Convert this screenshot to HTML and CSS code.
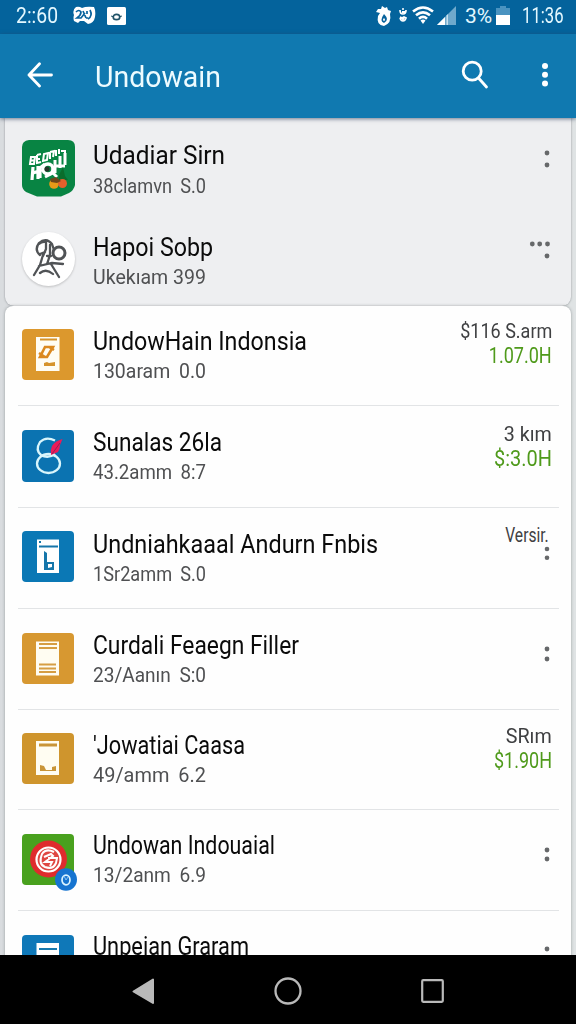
FILE: index.html
```html
<!DOCTYPE html>
<html lang="id">
<head>
<meta charset="utf-8">
<title>Undowain</title>
<link rel="stylesheet" href="styles.css">
</head>
<body>
<div class="screen">
  <header class="statusbar">
    <span class="clock">2::60</span>
    <svg class="note-icon" width="23" height="19" viewBox="0 0 23 19">
      <path fill="#fff" d="M3 1Q6 0 9 2Q13 0 21 1Q23 5 22 11Q21 17 15 18L11 15H7L5 17L1 15Q0 12 1 9Q-1 4 3 1Z"/>
      <path fill="none" stroke="#07629c" stroke-width="1.7" d="M3 6Q6 3 8 6Q8 9 4 12H8L12 7M10 5L13 12M14 5V8M17 4Q20 10 15 13M13 12H15"/>
    </svg>
    <svg class="app-icon" width="19" height="18" viewBox="0 0 19 18">
      <rect width="19" height="18" rx="1.5" fill="#fff"/>
      <ellipse cx="9.5" cy="10" rx="3.3" ry="2.7" fill="none" stroke="#225368" stroke-width="1.7"/>
      <path d="M4 9L7 10M12 10L15 9" stroke="#225368"/>
    </svg>
    <span class="spacer"></span>
    <svg class="flame" width="16" height="20" viewBox="0 0 16 20">
      <path fill="#fff" d="M6 0L9 2L11 1L12 4L15 5L14 8Q16 17 8 20Q0 19 2 10L4 7L0 6L2 3H5Z"/>
      <path fill="#07629c" d="M8 8Q14 14 8 17Q3 15 8 8Z"/>
      <path fill="#fff" d="M8 12Q10 14 8 15Q6 14 8 12Z"/>
    </svg>
    <svg class="mini" width="8" height="15" viewBox="0 0 8 15">
      <path fill="none" stroke="#fff" stroke-width="1.7" d="M1 2Q1 6 4 6Q7 6 7 2M3 1H5M1 9L3 10L5 9L7 10Q6 13 4 13Q2 13 1 10"/>
      <path fill="#fff" d="M3 3H6V5H3ZM2 10H6L4 13Z"/>
    </svg>
    <svg class="wifi" width="22" height="19" viewBox="0 0 22 19">
      <path fill="none" stroke="#fff" stroke-width="2.6" d="M1 5.5Q11-2.5 21 5.5M4 9.3Q11 3.5 18 9.3M7 12.8Q11 9 15 12.8"/>
      <path fill="#fff" d="M8.5 14.5Q11 12.5 13.5 14.5L11 18Z"/>
    </svg>
    <svg class="signal" width="19" height="19" viewBox="0 0 19 19">
      <path fill="#6fa9cc" d="M0 19L19 0V19Z"/>
      <path fill="#fff" d="M0 19L8 11V19Z"/>
      <path fill="#c6e0ee" d="M9.5 9.5L11 8V19H9.5Z"/>
    </svg>
    <span class="percent">3%</span>
    <svg class="battery" width="14" height="19" viewBox="0 0 14 19">
      <path fill="#4a93c0" d="M4 0H10V2H14V9H0V2H4Z"/>
      <path fill="#fff" d="M0 9H14V19H0Z"/>
    </svg>
    <span class="time">11:36</span>
  </header>

  <nav class="appbar">
    <svg class="back" width="26" height="26" viewBox="0 0 26 26">
      <path fill="none" stroke="#fff" stroke-width="2.8" stroke-linecap="round" stroke-linejoin="round" d="M12.5 1.7L2 13L12.500 24M2 13H24.5"/>
    </svg>
    <h1>Undowain</h1>
    <span class="spacer"></span>
    <svg class="search" width="28" height="29" viewBox="0 0 28 29">
      <g fill="none" stroke="#fff" stroke-width="2.8" stroke-linecap="round">
        <circle cx="11.2" cy="11.2" r="9"/><path d="M17.5 18L25.5 27"/>
      </g>
    </svg>
    <svg class="overflow" width="8" height="26" viewBox="0 0 8 26" fill="#fff">
      <circle cx="4" cy="4" r="3"/><circle cx="4" cy="12.7" r="3"/><circle cx="4" cy="21.5" r="3"/>
    </svg>
  </nav>

  <main class="content">
    <section class="panel">
      <article class="row udadiar">
        <svg class="icon" width="53" height="57" viewBox="0 0 53 57">
          <path fill="#088443" d="M7 0H46Q53 0 53 7V45Q52 50 47 53L39 56.5H15L4 52Q0 49 0 45V7Q0 1 7 0Z"/>
          <g fill="none" stroke="#fff" stroke-width="2">
            <path d="M9 17L8 24H12L13 17ZM8.500 20.500H13M15 15V23L19 22M15 15L19 14M16 19H18M22 14L21 21L25 20L26 13ZM28 12V19M28 12L32 11L31 17M34 10V16M37 9V14M39 11H43V18"/>
            <path stroke-width="3.200" d="M11 27L10 40M16 26V39M11 33L20 30M18 38V28L23 24"/>
            <circle cx="26" cy="29" r="5" stroke-width="3.500"/>
            <path stroke-width="3" d="M33 20V33M38 16V28M43 13V25M33 26H43M23 37L31 33L35 37"/>
          </g>
          <path fill="#0a6d2c" d="M37 35L41 27L43 36L46 40H37Z"/>
          <circle cx="25" cy="29" r="2.600" fill="#26352a"/>
          <circle cx="32" cy="44" r="4.800" fill="#e99a18"/><circle cx="40.500" cy="43.500" r="4.500" fill="#e5602c"/>
          <path fill="#70451a" d="M28 39L34 37L39 41L35 43L29 42Z"/>
        </svg>
        <div class="text"><h2>Udadiar Sirn</h2><p>38clamvn S.0</p></div>
        <svg class="more" width="30" height="20" viewBox="0 0 30 20"><circle cx="26" cy="4" r="2.400"/><circle cx="26" cy="16" r="2.400"/></svg>
      </article>
      <article class="row hapoi">
        <svg class="icon round" width="53" height="54" viewBox="0 0 53 54">
          <ellipse cx="26.500" cy="27" rx="26.500" ry="27" fill="#fff"/>
          <g fill="none" stroke="#505356" stroke-width="2.300" stroke-linecap="round">
            <path d="M18 23Q12 18 17 11Q24 5 30 12L32 18M17 12Q20 9 24 10V17L21 24M28 13V23L25 32M21 23L18 33L12 43M17 34L30 31L41 32M29 32L37 45M18 41Q24 36 31 42M25 24H29M18 22L23 20"/>
            <circle cx="37" cy="21" r="6" stroke-width="3"/>
          </g>
        </svg>
        <div class="text"><h2>Hapoi Sobp</h2><p>Ukekıam 399</p></div>
        <svg class="more" width="30" height="20" viewBox="0 0 30 20"><circle cx="11.300" cy="4" r="2.400"/><circle cx="18.700" cy="4" r="2.400"/><circle cx="26.500" cy="4" r="2.400"/><circle cx="26" cy="16" r="2.400"/></svg>
      </article>
    </section>

    <section class="card">
      <article class="row indonsia">
        <svg class="icon" width="52" height="51" viewBox="0 0 52 51">
          <rect width="52" height="51" rx="4" fill="#dc982d"/>
          <path fill="#fffdf4" d="M14 8H37.500V42H14Z"/>
          <path fill="#d6942c" d="M18 9.500H35V11.500H18ZM22 34L25 33L27 34L33 33V37H22Z"/>
          <path fill="none" stroke="#db8920" stroke-width="2.600" d="M23 18H31L25 28H18ZM17 24L23 28M27 18L32 21"/>
        </svg>
        <div class="text"><h2>UndowHain Indonsia</h2><p>130aram 0.0</p></div>
        <div class="meta"><span class="dist">$116 S.arm</span><span class="price">1.07.0H</span></div>
      </article>
      <article class="row sunalas">
        <svg class="icon" width="52" height="52" viewBox="0 0 52 52">
          <rect width="52" height="52" rx="4" fill="#0b73b1"/>
          <path fill="none" stroke="#d9f5fb" stroke-width="2.300" d="M33 10.500Q24 6 18 12Q13 20 19 25Q26 29 33 24"/>
          <ellipse cx="26.500" cy="33.500" rx="11.500" ry="9.500" fill="none" stroke="#d9f5fb" stroke-width="2.300"/>
          <path fill="#ec1b59" d="M40.500 9Q33 11 30 16Q28 20 29 25L36 22Q38 19 38 15Z"/>
          <path stroke="#91205b" stroke-width="1" d="M30 24L38 13"/>
        </svg>
        <div class="text"><h2>Sunalas 26la</h2><p>43.2amm 8:7</p></div>
        <div class="meta"><span class="dist">3 kım</span><span class="price">$:3.0H</span></div>
      </article>
      <article class="row andurn">
        <svg class="icon" width="52" height="51" viewBox="0 0 52 51">
          <rect width="52" height="51" rx="4" fill="#0b78b5"/>
          <path fill="#fff" d="M15 8.500H37V42H15Z"/>
          <path fill="#1676aa" d="M17 14.500H36V16.500H17ZM17 10H19V12H17ZM22 20L25 22V31H32V39H22Z"/>
          <path fill="#fff" d="M26 33H30V36L26 37Z"/>
        </svg>
        <div class="text"><h2>Undniahkaaal Andurn Fnbis</h2><p>1Sr2amm S.0</p></div>
        <div class="meta"><span class="dist">Versir.</span>
        <svg class="more" width="30" height="20" viewBox="0 0 30 20"><circle cx="26" cy="4" r="2.300"/><circle cx="26" cy="12.700" r="2.300"/></svg></div>
      </article>
      <article class="row curdali">
        <svg class="icon" width="52" height="51" viewBox="0 0 52 51">
          <rect width="52" height="51" rx="4" fill="#d79831"/>
          <path fill="#fffdf2" d="M14 8.500H37V42.500H14Z"/>
          <path stroke="#d69e43" stroke-width="2" d="M17 11H35M17 15H35M17 31.500H34M17 35.500H34M17 39H34"/>
        </svg>
        <div class="text"><h2>Curdali Feaegn Filler</h2><p>23/Aanın S:0</p></div>
        <svg class="more" width="30" height="20" viewBox="0 0 30 20"><circle cx="26" cy="4" r="2.400"/><circle cx="26" cy="14" r="2.400"/></svg>
      </article>
      <article class="row jowatiai">
        <svg class="icon" width="52" height="51" viewBox="0 0 52 51">
          <rect width="52" height="51" rx="4" fill="#cf952d"/>
          <path fill="#fffdf2" d="M14 8H37V42H14Z"/>
          <path fill="#c99538" d="M17 10.500H35V13.500H17ZM18 32L22 33L24 37H30V34L34 33V38H18Z"/>
        </svg>
        <div class="text"><h2>'Jowatiai Caasa</h2><p>49/amm 6.2</p></div>
        <div class="meta"><span class="dist">SRım</span><span class="price">$1.90H</span></div>
      </article>
      <article class="row indouaial">
        <div class="icon badged">
          <svg width="52" height="51" viewBox="0 0 52 51">
            <rect width="52" height="51" rx="4" fill="#49a11e"/>
            <circle cx="26.500" cy="25" r="18.500" fill="#df2b2d"/>
            <circle cx="26.500" cy="25.500" r="12" fill="#df4742" stroke="#fff" stroke-width="2.200"/>
            <path fill="none" stroke="#fff" stroke-width="2" d="M32 18Q24 14 20 20Q16 30 23 33Q31 36 34 29L35 24H26M22 23L29 20L31 22L23 28H30L28 32"/>
          </svg>
          <svg class="badge" width="22" height="23" viewBox="0 0 22 23">
            <ellipse cx="11" cy="11.500" rx="11" ry="11.300" fill="#1674d0"/>
            <ellipse cx="11" cy="12" rx="4" ry="4.800" fill="none" stroke="#d9f3ff" stroke-width="1.700"/>
            <path d="M9 8L11 12L13 9" fill="none" stroke="#8bc4f2"/>
          </svg>
        </div>
        <div class="text"><h2>Undowan Indouaial</h2><p>13/2anm 6.9</p></div>
        <svg class="more" width="30" height="20" viewBox="0 0 30 20"><circle cx="26" cy="4" r="2.400"/><circle cx="26" cy="13" r="2.400"/></svg>
      </article>
      <article class="row graram">
        <svg class="icon" width="52" height="51" viewBox="0 0 52 51">
          <rect width="52" height="51" rx="4" fill="#0f78b8"/>
          <path fill="#fff" d="M14.500 8H37V42H14.500Z"/><path stroke="#1679ae" stroke-width="2" d="M17 14H35"/>
        </svg>
        <div class="text"><h2>Unpeian Graram</h2></div>
        <svg class="more" width="30" height="20" viewBox="0 0 30 20"><circle cx="26" cy="4" r="2.400"/></svg>
      </article>
    </section>
  </main>

  <footer class="navbar">
    <svg width="23" height="27" viewBox="0 0 23 27"><path fill="#b9b9b9" stroke="#b9b9b9" stroke-width="2" stroke-linejoin="round" d="M1.500 13.500L21 1.500V25Z"/></svg>
    <svg width="28" height="28" viewBox="0 0 28 28"><circle cx="14" cy="14" r="12.500" fill="none" stroke="#b9b9b9" stroke-width="2.300"/></svg>
    <svg width="23" height="24" viewBox="0 0 23 24"><rect x="1.200" y="1.200" width="20.600" height="21.600" rx="1" fill="none" stroke="#b9b9b9" stroke-width="2.200"/></svg>
  </footer>
</div>
</body>
</html>
```

FILE: styles.css
```css
* { box-sizing: border-box; }
body { margin: 0; font-family: Roboto, "Liberation Sans", sans-serif; }
h1, h2, p { margin: 0; font-weight: 400; }
svg { display: block; flex: none; }
.spacer { flex: 1; }

.screen {
  width: 576px;
  height: 1024px;
  display: flex;
  flex-direction: column;
  overflow: hidden;
}

/* Status bar */
.statusbar {
  flex: none;
  height: 34px;
  padding: 0 13px 0 16px;
  display: flex;
  align-items: center;
  background: #04639c;
  color: #e4f8ff;
  font-size: 22px;
  line-height: 32px;
  white-space: nowrap;
}
.statusbar span { transform-origin: 0 50%; margin-top: -2px; }
.statusbar svg { margin-top: -3px; }
.clock { width: 57px; transform: scaleX(.88); }
.note-icon { margin-right: 11px; }
.flame { margin-right: 7px; }
.mini { margin-right: 5px; }
.wifi { margin-right: 3px; }
.signal { margin-right: 9px; }
.percent { width: 31px; font-size: 21px; }
.battery { margin-right: 12px; }
.time { width: 41px; transform: scaleX(.76); }

/* App bar */
.appbar {
  position: relative;
  z-index: 1;
  flex: none;
  height: 84px;
  padding: 0 27px;
  display: flex;
  align-items: center;
  background: #1079b0;
  box-shadow: 0 1px 4px rgba(45, 62, 90, .65);
  color: #edfbff;
}
.appbar svg { margin-top: -3px; }
.appbar h1 {
  margin: 2px 0 0 42px;
  font-size: 29.5px;
  line-height: 36px;
  transform: scaleX(.965);
  transform-origin: 0 50%;
}
.search { margin-right: 52px; }

/* List */
.content {
  flex: 1;
  min-height: 0;
  padding: 0 5px;
  overflow: hidden;
  background: linear-gradient(90deg, #d9dcdf, #dfe3e4);
}
.panel {
  height: 188px;
  background: #eeeff1;
  border-radius: 0 0 9px 9px;
  box-shadow: 0 0 2px rgba(70, 75, 80, .6);
}
.card {
  background: #fefefe;
  border-radius: 8px 8px 0 0;
  box-shadow: 0 0 3px rgba(80, 85, 90, .5);
}
.row {
  display: flex;
  align-items: flex-start;
  padding: 24px 20px 0 17px;
  position: relative;
}
.card .row { height: 101px; }
.card .row:not(:last-child)::after {
  content: "";
  position: absolute;
  left: 13px;
  right: 12px;
  bottom: 0;
  height: 1px;
  background: #e2e4e6;
}
.text { flex: 1; margin: -2px 0 0 19px; white-space: nowrap; }
.text h2 {
  width: max-content;
  font-size: 25px;
  line-height: 30px;
  color: #0b0b0b;
  transform-origin: 0 50%;
}
.text p {
  width: max-content;
  margin-top: 2px;
  font-size: 20px;
  line-height: 24px;
  word-spacing: 4px;
  color: #4f5052;
  transform-origin: 0 50%;
}
.meta {
  display: flex;
  flex-direction: column;
  align-items: flex-end;
  margin: -9px -1px 0 0;
  white-space: nowrap;
}
.dist, .price { display: block; transform-origin: 100% 50%; }
.dist { font-size: 20px; line-height: 24px; color: #3f4042; }
.price { font-size: 22px; line-height: 26px; color: #4f9a1b; }
.more { fill: #66686a; }

.panel .udadiar { height: 96px; padding-top: 22px; }
.panel .hapoi { height: 92px; padding-top: 18px; }
.udadiar .text { margin-left: 18px; margin-top: 1px; }
.hapoi .text { margin-left: 18px; margin-top: 1px; }
.udadiar .text p { margin-top: 3px; }
.round { overflow: visible; filter: drop-shadow(0 1px 1px rgba(0, 0, 0, .2)); }
.udadiar .more { margin-top: 9px; }
.hapoi .more { margin-top: 8px; }

.card .indonsia { height: 100px; padding-top: 23px; }
.card .indonsia .meta { margin-top: -10px; }
.card .sunalas { height: 102px; }
.card .sunalas .meta { margin-top: -8px; }
.card .andurn .icon { margin-top: -1px; }
.card .jowatiai { height: 100px; padding-top: 23px; }
.card .indouaial .text { margin-top: -3px; }
.card .graram .text { margin-top: -3px; }
.card .andurn .meta { margin-right: 0; }
.andurn .meta .more { margin-top: -2px; }
.curdali .more { margin-top: 12px; }
.indouaial .more { margin-top: 12px; }
.graram .more { margin-top: 10px; }

.badged { position: relative; width: 52px; flex: none; }
.badge { position: absolute; left: 33px; top: 34px; }

/* Condensed widths of the individual labels */
.udadiar h2 { transform: scaleX(.974); }
.udadiar p { transform: scaleX(.909); }
.hapoi h2 { transform: scaleX(.93); }
.hapoi p { transform: scaleX(.977); word-spacing: 0; }
.indonsia h2 { transform: scaleX(.93); }
.indonsia p { transform: scaleX(.973); }
.indonsia .dist { transform: scaleX(.9); }
.indonsia .price { transform: scaleX(.821); }
.sunalas h2 { transform: scaleX(.905); }
.sunalas p { transform: scaleX(.932); }
.sunalas .dist { transform: scaleX(.983); }
.sunalas .price { transform: scaleX(.907); }
.andurn h2 { transform: scaleX(.937); }
.andurn p { transform: scaleX(.908); }
.andurn .dist { transform: translateX(-2px) scaleX(.78); }
.curdali h2 { transform: scaleX(.912); }
.curdali p { transform: scaleX(.953); }
.jowatiai h2 { transform: scaleX(.869); }
.jowatiai p { transform: scaleX(.996); }
.jowatiai .dist { transform: scaleX(.985); }
.jowatiai .price { transform: scaleX(.817); }
.indouaial h2 { transform: scaleX(.855); }
.indouaial p { transform: scaleX(.956); }
.graram h2 { transform: scaleX(.871); }

/* System navigation */
.navbar {
  position: relative;
  z-index: 1;
  flex: none;
  height: 69px;
  padding: 3px 132px 0;
  display: flex;
  align-items: center;
  justify-content: space-between;
  background: #000;
}
```
